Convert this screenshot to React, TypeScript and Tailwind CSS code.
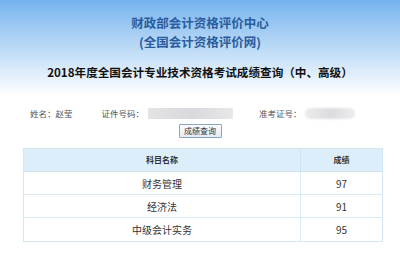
const rows = [
  { name: '财务管理', score: '97' },
  { name: '经济法', score: '91' },
  { name: '中级会计实务', score: '95' },
]

const cjk = { fontFamily: '"Noto Sans CJK SC", "Liberation Sans", sans-serif' }

export default function App() {
  return (
    <div className="w-[400px] h-[253px] overflow-hidden bg-white" style={cjk}>
      <div className="h-[96px] bg-gradient-to-b from-[#74b3ee] via-[#bcdaf6] to-white flex flex-col items-center">
        <div className="mt-[14px] text-[12.5px] leading-[18px] font-bold text-[#2a5c9e]">
          财政部会计资格评价中心
        </div>
        <div className="mt-[1px] text-[12.5px] leading-[18px] font-bold text-[#2a5c9e]">
          (全国会计资格评价网)
        </div>
        <div className="mt-[13px] text-[11.6px] leading-[16px] font-bold text-[#111]">
          2018年度全国会计专业技术资格考试成绩查询（中、高级）
        </div>
      </div>

      <div className="flex items-center h-[14px] mt-[10px] text-[8.5px] text-[#555]">
        <span className="ml-[30px]">姓名：赵莹</span>
        <span className="ml-[29px]">证件号码：</span>
        <span className="ml-[4px] w-[85px] h-[11px] bg-gradient-to-r from-[#e4e4e6] via-[#d9d9dd] to-[#e8e8ea] blur-[0.6px]" />
        <span className="ml-[26px]">准考证号：</span>
        <span className="ml-[3px] w-[50px] h-[11px] rounded-full bg-gradient-to-r from-[#ececee] via-[#dcdce0] to-[#ececee] blur-[0.8px]" />
      </div>

      <div className="flex justify-center mt-[4px]">
        <button className="w-[43px] h-[14px] border border-[#8aa4c4] bg-gradient-to-b from-[#fbfcfe] to-[#e4ebf4] text-[8px] leading-[12px] text-[#333] rounded-[1px]">
          成绩查询
        </button>
      </div>

      <div className="mx-[23px] mt-[10px] w-[360px] border border-[#d3e8f3]">
        <div className="flex h-[23px] bg-[#dbeefa] border-b border-[#cfe4f0] text-[8px] font-bold text-[#333]">
          <div className="w-[277px] flex items-center justify-center border-r border-[#cfe4f0]">科目名称</div>
          <div className="flex-1 flex items-center justify-center">成绩</div>
        </div>
        {rows.map((r, i) => (
          <div
            key={r.name}
            className={`flex h-[23px] text-[10px] text-[#333] ${i < rows.length - 1 ? 'border-b border-[#d8eaf4]' : ''}`}
          >
            <div className="w-[277px] flex items-center justify-center border-r border-[#d8eaf4]">{r.name}</div>
            <div className="flex-1 flex items-center justify-center">{r.score}</div>
          </div>
        ))}
      </div>
    </div>
  )
}
